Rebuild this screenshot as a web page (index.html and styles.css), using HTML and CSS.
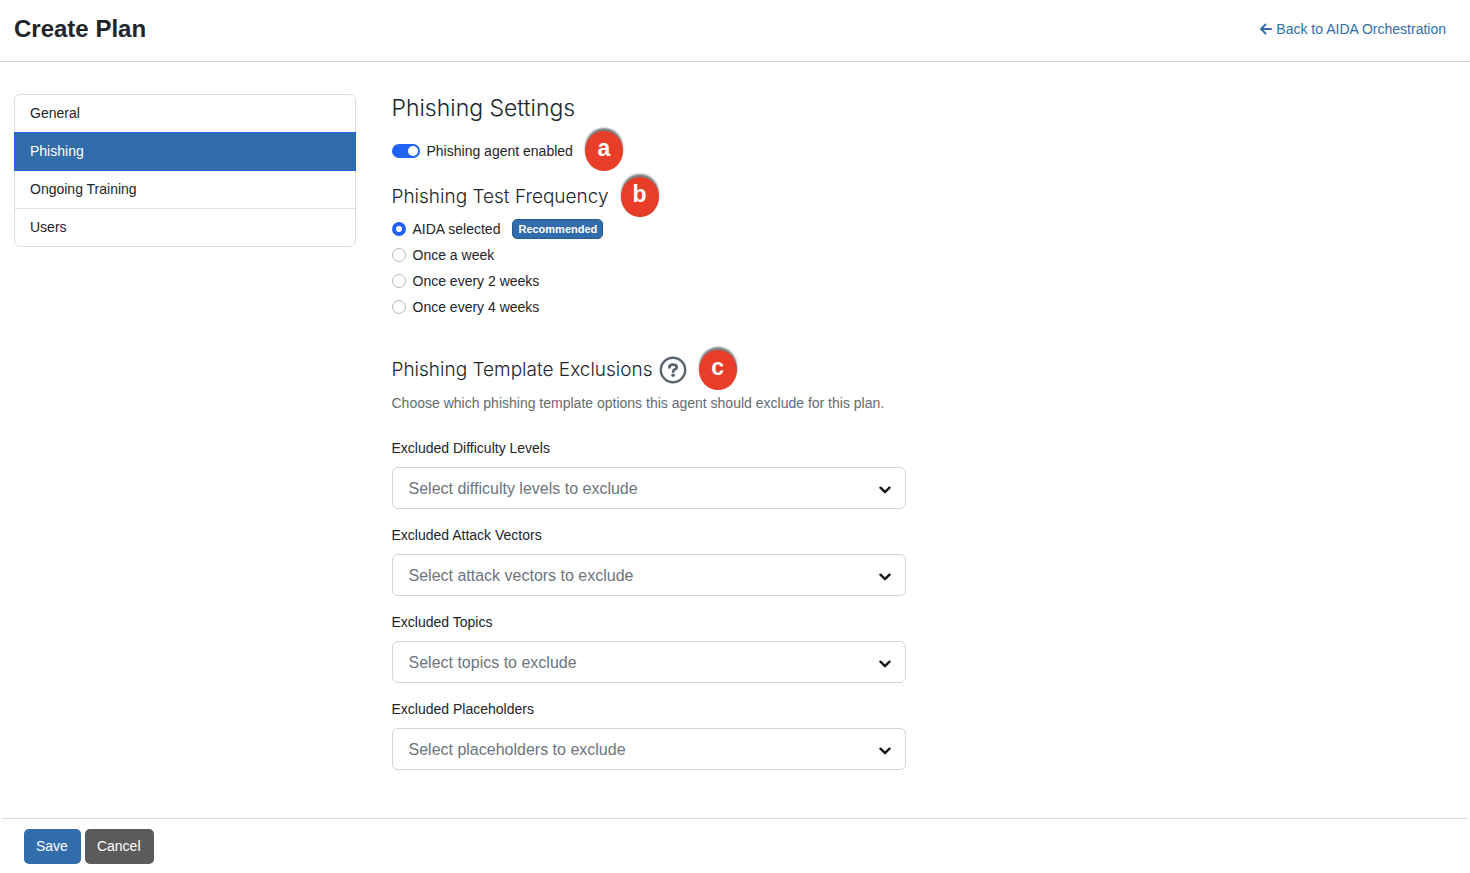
FILE: index.html
```html
<!DOCTYPE html>
<html lang="en">
<head>
<meta charset="utf-8">
<meta name="viewport" content="width=device-width, initial-scale=1">
<title>Create Plan</title>
<link rel="stylesheet" href="styles.css">
</head>
<body>
<header class="page-header">
  <h1 class="page-title">Create Plan</h1>
  <a class="back-link" href="#"><svg class="back-icon" viewBox="0 0 12 12" aria-hidden="true"><path d="M11.200 6H1.200M5.500 1.500L1 6l4.500 4.500"/></svg>Back to AIDA Orchestration</a>
</header>
<form class="plan-form">
  <div class="plan-body">
    <nav class="steps" aria-label="Plan sections">
      <ul class="step-list">
        <li class="step"><a class="step-link" href="#">General</a></li>
        <li class="step step-active"><a class="step-link" href="#" aria-current="page">Phishing</a></li>
        <li class="step"><a class="step-link" href="#">Ongoing Training</a></li>
        <li class="step"><a class="step-link" href="#">Users</a></li>
      </ul>
    </nav>
    <main class="settings">
      <h2 class="settings-title">Phishing Settings</h2>
      <div class="switch-row">
        <input class="switch" type="checkbox" role="switch" id="agent" checked>
        <label for="agent">Phishing agent enabled</label>
        <span class="marker">a</span>
      </div>
      <h3 class="section-title" id="frequency">Phishing Test Frequency<span class="marker">b</span></h3>
      <div class="radio-group" role="radiogroup" aria-labelledby="frequency">
        <div class="radio-row"><input class="radio" type="radio" name="frequency" id="f-aida" checked><label for="f-aida">AIDA selected</label><span class="badge">Recommended</span></div>
        <div class="radio-row"><input class="radio" type="radio" name="frequency" id="f-1"><label for="f-1">Once a week</label></div>
        <div class="radio-row"><input class="radio" type="radio" name="frequency" id="f-2"><label for="f-2">Once every 2 weeks</label></div>
        <div class="radio-row"><input class="radio" type="radio" name="frequency" id="f-4"><label for="f-4">Once every 4 weeks</label></div>
      </div>
      <h3 class="section-title">Phishing Template Exclusions<button class="help" type="button" aria-label="Help"><svg class="help-icon" viewBox="0 0 28 28" aria-hidden="true"><circle cx="14" cy="14" r="12.200"/><path class="help-hook" d="M10.400 11.400c0-1.700 1.400-2.700 3.600-2.700 2.300 0 3.700 1 3.700 2.700 0 2-3.500 2.200-3.500 4.100"/><circle class="help-dot" cx="14.100" cy="19.200" r="1.800"/></svg></button><span class="marker">c</span></h3>
      <p class="section-note">Choose which phishing template options this agent should exclude for this plan.</p>
      <div class="field">
        <label for="levels">Excluded Difficulty Levels</label>
        <div class="select-box"><select class="select" id="levels"><option>Select difficulty levels to exclude</option></select><svg class="chevron" viewBox="0 0 12 8" aria-hidden="true"><path d="M1.500 1.700L6 6.200l4.500-4.500"/></svg></div>
      </div>
      <div class="field">
        <label for="vectors">Excluded Attack Vectors</label>
        <div class="select-box"><select class="select" id="vectors"><option>Select attack vectors to exclude</option></select><svg class="chevron" viewBox="0 0 12 8" aria-hidden="true"><path d="M1.500 1.700L6 6.200l4.500-4.500"/></svg></div>
      </div>
      <div class="field">
        <label for="topics">Excluded Topics</label>
        <div class="select-box"><select class="select" id="topics"><option>Select topics to exclude</option></select><svg class="chevron" viewBox="0 0 12 8" aria-hidden="true"><path d="M1.500 1.700L6 6.200l4.500-4.500"/></svg></div>
      </div>
      <div class="field">
        <label for="placeholders">Excluded Placeholders</label>
        <div class="select-box"><select class="select" id="placeholders"><option>Select placeholders to exclude</option></select><svg class="chevron" viewBox="0 0 12 8" aria-hidden="true"><path d="M1.500 1.700L6 6.200l4.500-4.500"/></svg></div>
      </div>
    </main>
  </div>
  <footer class="actions">
    <button class="button button-save" type="submit">Save</button>
    <button class="button button-cancel" type="button">Cancel</button>
  </footer>
</form>
</body>
</html>
```

FILE: styles.css
```css
* { box-sizing: border-box; }
body {
  margin: 0;
  background: #fff;
  color: #212529;
  font: 14px/20px "Liberation Sans", Arial, sans-serif;
}
h1, h2, h3, p, ul { margin: 0; padding: 0; }
svg { fill: none; stroke: currentColor; stroke-linecap: round; stroke-linejoin: round; }

.page-header {
  display: flex;
  justify-content: space-between;
  align-items: center;
  padding: 13px 24px 16px 14px;
  border-bottom: 1px solid #ced0d2;
}
.page-title { font-size: 24px; line-height: 32px; font-weight: 700; }
.back-link {
  display: flex;
  align-items: center;
  gap: 4px;
  color: #316dab;
  text-decoration: none;
}
.back-icon { width: 12px; height: 12px; stroke-width: 1.8; }

.plan-body { display: grid; grid-template-columns: 1fr 3fr; padding-bottom: 48px; }
.steps { padding: 32px 12px 0 14px; }
.step-list { list-style: none; border: 1px solid #dcdee0; border-radius: 6px; }
.step + .step { border-top: 1px solid #dcdee0; }
.step-link { display: block; padding: 8px 15px 9px; color: inherit; text-decoration: none; }
.step-list .step-active {
  margin: 0 -1px;
  border: 1px solid #1f62f0;
  background: #316dab;
  color: #fff;
}
.step-active + .step { border-top: 0; }

.settings { padding: 32px 24px 0; }
.settings-title { font: 300 23px/28px Inter, "Liberation Sans", sans-serif; }
.switch-row {
  position: relative;
  display: flex;
  align-items: center;
  gap: 7px;
  width: fit-content;
  margin: 19px 0 22px;
}
.switch {
  appearance: none;
  display: flex;
  justify-content: flex-end;
  align-items: center;
  width: 28px;
  height: 14px;
  margin: 0;
  padding: 2px;
  border-radius: 7px;
  background: #1f62f5;
}
.switch::before { content: ""; width: 10px; height: 10px; border-radius: 50%; background: #fff; }
.switch:not(:checked) { justify-content: flex-start; background: #adb5bd; }

.section-title {
  position: relative;
  display: flex;
  align-items: center;
  width: fit-content;
  font: 300 19px/28px Inter, "Liberation Sans", sans-serif;
}
.marker {
  position: absolute;
  left: 100%;
  top: 50%;
  display: flex;
  justify-content: center;
  width: 38px;
  height: 40px;
  margin: -20px 0 0 12px;
  border-radius: 50%;
  background: #e83d29;
  box-shadow: 0 -3px 2px #7c7c7c;
  color: #fff;
  font: 700 23px/34px "Liberation Sans", Arial, sans-serif;
}

.radio-group { margin: 5px 0 36px; }
.radio-row { display: flex; align-items: center; height: 26px; }
.radio {
  appearance: none;
  width: 14px;
  height: 14px;
  margin: 0 7px 0 0;
  border: 1px solid #b4b7ba;
  border-radius: 50%;
}
.radio:checked { border: 4px solid #1f62f5; }
.badge {
  margin-left: 12px;
  padding: 0 5px;
  border: 1px solid #285b91;
  border-radius: 5px;
  background: #316dab;
  color: #fff;
  font-size: 11px;
  line-height: 18px;
  font-weight: 700;
}

.help { display: flex; margin: 0 0 0 6px; padding: 0; border: 0; background: none; color: #5c656e; }
.help-icon { width: 28px; height: 28px; stroke-width: 2.4; }
.help-hook { stroke-width: 2.8; }
.help-dot { fill: currentColor; stroke: none; }
.section-note { margin: 9px 0 25px; color: #636c75; }

.field { display: grid; gap: 9px; max-width: 514px; }
.field + .field { margin-top: 16px; }
.select-box { position: relative; }
.select {
  appearance: none;
  display: block;
  width: 100%;
  padding: 9px 40px 7px 16px;
  border: 1px solid #d0d4d9;
  border-radius: 6px;
  background: #fff;
  color: #6c757d;
  font: 16px/24px "Liberation Sans", Arial, sans-serif;
}
.chevron {
  position: absolute;
  right: 15px;
  top: 19px;
  width: 12px;
  height: 8px;
  color: #111618;
  stroke-width: 2.4;
  pointer-events: none;
}

.actions { display: flex; gap: 4px; margin: 0 2px; padding: 10px 22px; border-top: 1px solid #d8dadc; }
.button {
  padding: 7px 13px 8px 12px;
  border: 0;
  border-radius: 5px;
  color: #fff;
  font: 14px/20px "Liberation Sans", Arial, sans-serif;
}
.button-save { background: #316dab; }
.button-cancel { background: #5b5b5b; }
```
